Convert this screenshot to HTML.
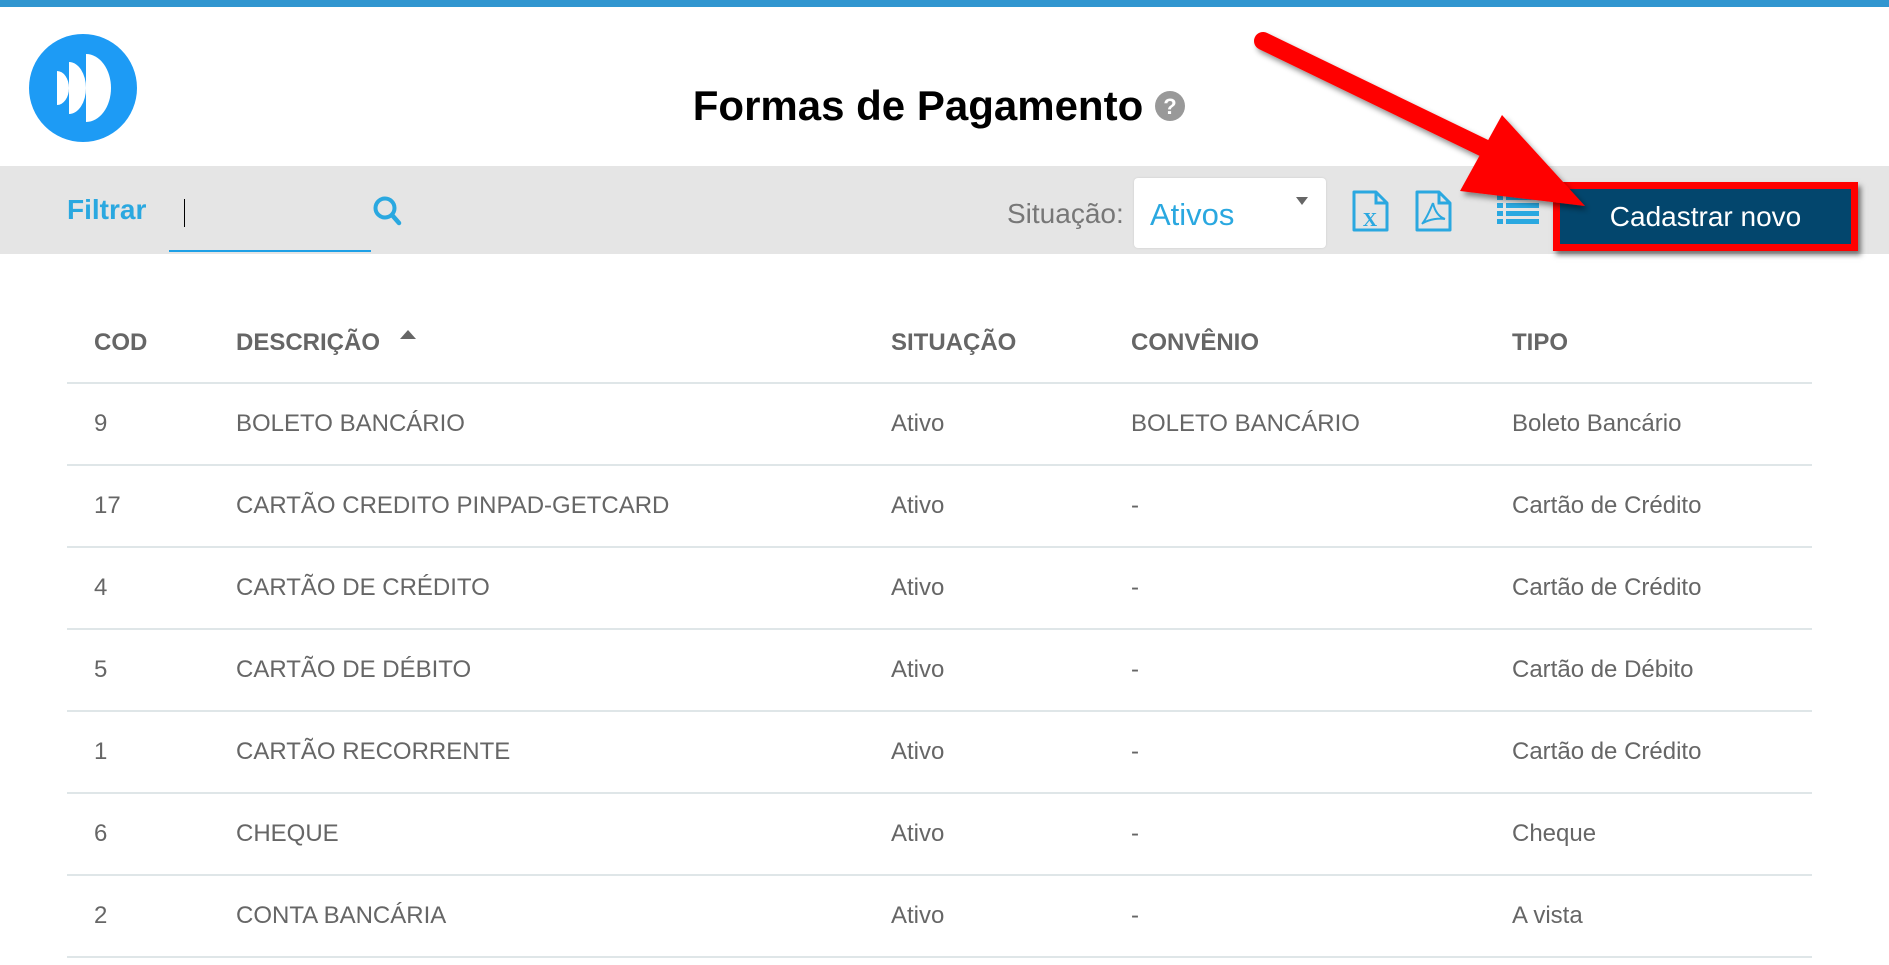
<!DOCTYPE html>
<html><head><meta charset="utf-8"><style>
*{margin:0;padding:0;box-sizing:border-box}
body{width:1889px;height:965px;overflow:hidden;background:#fff;font-family:"Liberation Sans",Arial,sans-serif;position:relative}
.abs{position:absolute}
.topbar{left:0;top:0;width:1889px;height:7px;background:#3196d0}
.bar{left:0;top:166px;width:1889px;height:88px;background:#e5e5e5}
.title{left:0;width:1836px;top:82px;text-align:center;font-size:42px;font-weight:bold;color:#000}
.th{top:329px;font-size:24px;font-weight:bold;color:#666}
.td{font-size:24px;color:#666}
.line{left:67px;width:1745px;height:2px;background:#dfe6e8}
</style></head><body>
<div class="abs topbar"></div>
<svg class="abs" style="left:28px;top:33px" width="110" height="110" viewBox="0 0 110 110">
<circle cx="55" cy="55" r="54" fill="#1d9bf5"/>
<path d="M29 38 A12 17 0 0 1 29 72 Z" fill="#fff"/>
<path d="M41 29 A17 26 0 0 1 41 81 Z" fill="#fff"/>
<path d="M58 21 A25 34 0 0 1 58 89 Z" fill="#fff"/>
</svg>
<div class="abs title">Formas de Pagamento</div>
<svg class="abs" style="left:1154px;top:90px" width="32" height="32" viewBox="0 0 32 32"><circle cx="16" cy="16" r="15" fill="#999"/><text x="16" y="24" text-anchor="middle" font-family="Liberation Sans" font-weight="bold" font-size="22" fill="#fff">?</text></svg>
<div class="abs bar"></div>
<div class="abs" style="left:67px;top:194px;font-size:28px;font-weight:bold;color:#2aa8e0">Filtrar</div>
<div class="abs" style="left:184px;top:199px;width:1px;height:28px;background:#000"></div>
<div class="abs" style="left:169px;top:250px;width:202px;height:2px;background:#1ea0e6"></div>
<svg class="abs" style="left:372px;top:195px" width="32" height="32" viewBox="0 0 32 32"><circle cx="13" cy="13" r="9.5" fill="none" stroke="#2aa8e0" stroke-width="4"/><path d="M20 20 L27 28" stroke="#2aa8e0" stroke-width="4.5" stroke-linecap="round"/></svg>
<div class="abs" style="left:1007px;top:198px;font-size:28px;color:#777">Situação:</div>
<div class="abs" style="left:1134px;top:178px;width:192px;height:70px;background:#fff;border-radius:4px;box-shadow:0 0 2px #ccc"></div>
<div class="abs" style="left:1150px;top:197px;font-size:31px;color:#2aa8e0">Ativos</div>
<div class="abs" style="left:1296px;top:197px;width:0;height:0;border-left:6px solid transparent;border-right:6px solid transparent;border-top:8px solid #666"></div>
<svg class="abs" style="left:1352px;top:190px" width="38" height="42" viewBox="0 0 38 42"><path d="M2 2 H24 L35 13 V40 H2 Z" fill="none" stroke="#2aa8e0" stroke-width="3" stroke-linejoin="round"/><path d="M24 2 V13 H35" fill="none" stroke="#2aa8e0" stroke-width="3"/><text x="18" y="36" text-anchor="middle" font-family="Liberation Serif" font-weight="bold" font-size="20" fill="#2aa8e0">X</text></svg>
<svg class="abs" style="left:1415px;top:190px" width="38" height="42" viewBox="0 0 38 42"><path d="M2 2 H24 L35 13 V40 H2 Z" fill="none" stroke="#2aa8e0" stroke-width="3" stroke-linejoin="round"/><path d="M24 2 V13 H35" fill="none" stroke="#2aa8e0" stroke-width="3"/><path d="M18 13 C15 20 12 28 7 34 M18 13 C20 22 24 27 30 29 C24 28 15 29 8 33" fill="none" stroke="#2aa8e0" stroke-width="2"/></svg>
<svg class="abs" style="left:1497px;top:194px" width="44" height="32" viewBox="0 0 44 32"><g fill="#2aa8e0"><rect x="0" y="1" width="6" height="5"/><rect x="9" y="1" width="33" height="5"/><rect x="0" y="9" width="6" height="5"/><rect x="9" y="9" width="33" height="5"/><rect x="0" y="17" width="6" height="5"/><rect x="9" y="17" width="33" height="5"/><rect x="0" y="25" width="6" height="5"/><rect x="9" y="25" width="33" height="5"/></g></svg>
<div class="abs" style="left:1553px;top:182px;width:305px;height:69px;border:7px solid #f00;background:#03466d;box-shadow:3px 4px 5px rgba(0,0,0,.5);color:#fff;font-size:28px;text-align:center;line-height:55px">Cadastrar novo</div>
<svg class="abs" style="left:0;top:0" width="1889" height="300">
<defs><filter id="sh" x="-10%" y="-10%" width="130%" height="130%"><feDropShadow dx="3" dy="4" stdDeviation="3" flood-color="#000" flood-opacity="0.45"/></filter></defs>
<g filter="url(#sh)" fill="#f00"><path d="M1263 41 L1515 163" stroke="#f00" stroke-width="18" stroke-linecap="round"/><path d="M1502 115 L1585 206 L1460 191 Z"/></g>
</svg>
<div class="abs th" style="left:94px">COD</div>
<div class="abs th" style="left:236px">DESCRIÇÃO</div>
<div class="abs" style="left:400px;top:330px;width:0;height:0;border-left:8px solid transparent;border-right:8px solid transparent;border-bottom:9px solid #666"></div>
<div class="abs th" style="left:891px">SITUAÇÃO</div>
<div class="abs th" style="left:1131px">CONVÊNIO</div>
<div class="abs th" style="left:1512px">TIPO</div>
<div class="abs line" style="top:382px"></div>
<div class="abs td" style="left:94px;top:410px">9</div><div class="abs td" style="left:236px;top:410px">BOLETO BANCÁRIO</div><div class="abs td" style="left:891px;top:410px">Ativo</div><div class="abs td" style="left:1131px;top:410px">BOLETO BANCÁRIO</div><div class="abs td" style="left:1512px;top:410px">Boleto Bancário</div>
<div class="abs line" style="top:464px"></div>
<div class="abs td" style="left:94px;top:492px">17</div><div class="abs td" style="left:236px;top:492px">CARTÃO CREDITO PINPAD-GETCARD</div><div class="abs td" style="left:891px;top:492px">Ativo</div><div class="abs td" style="left:1131px;top:492px">-</div><div class="abs td" style="left:1512px;top:492px">Cartão de Crédito</div>
<div class="abs line" style="top:546px"></div>
<div class="abs td" style="left:94px;top:574px">4</div><div class="abs td" style="left:236px;top:574px">CARTÃO DE CRÉDITO</div><div class="abs td" style="left:891px;top:574px">Ativo</div><div class="abs td" style="left:1131px;top:574px">-</div><div class="abs td" style="left:1512px;top:574px">Cartão de Crédito</div>
<div class="abs line" style="top:628px"></div>
<div class="abs td" style="left:94px;top:656px">5</div><div class="abs td" style="left:236px;top:656px">CARTÃO DE DÉBITO</div><div class="abs td" style="left:891px;top:656px">Ativo</div><div class="abs td" style="left:1131px;top:656px">-</div><div class="abs td" style="left:1512px;top:656px">Cartão de Débito</div>
<div class="abs line" style="top:710px"></div>
<div class="abs td" style="left:94px;top:738px">1</div><div class="abs td" style="left:236px;top:738px">CARTÃO RECORRENTE</div><div class="abs td" style="left:891px;top:738px">Ativo</div><div class="abs td" style="left:1131px;top:738px">-</div><div class="abs td" style="left:1512px;top:738px">Cartão de Crédito</div>
<div class="abs line" style="top:792px"></div>
<div class="abs td" style="left:94px;top:820px">6</div><div class="abs td" style="left:236px;top:820px">CHEQUE</div><div class="abs td" style="left:891px;top:820px">Ativo</div><div class="abs td" style="left:1131px;top:820px">-</div><div class="abs td" style="left:1512px;top:820px">Cheque</div>
<div class="abs line" style="top:874px"></div>
<div class="abs td" style="left:94px;top:902px">2</div><div class="abs td" style="left:236px;top:902px">CONTA BANCÁRIA</div><div class="abs td" style="left:891px;top:902px">Ativo</div><div class="abs td" style="left:1131px;top:902px">-</div><div class="abs td" style="left:1512px;top:902px">A vista</div>
<div class="abs line" style="top:956px"></div>
</body></html>
